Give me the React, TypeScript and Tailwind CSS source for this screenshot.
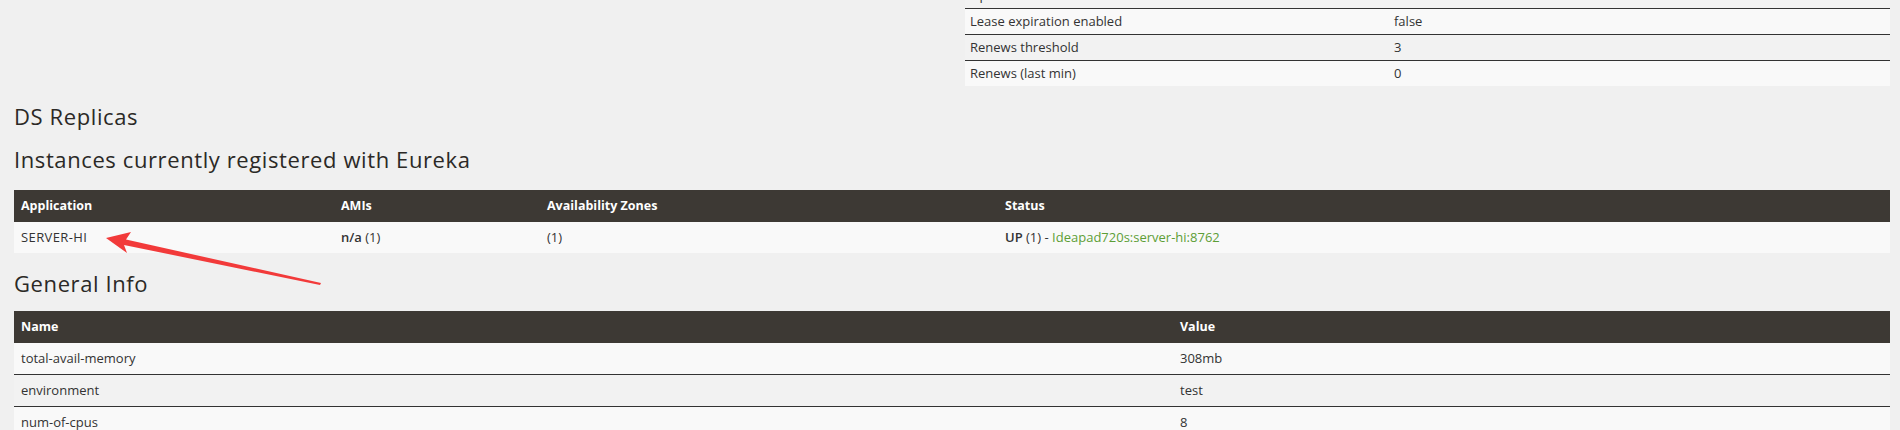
const systemRows = [
  { name: 'Uptime', value: '00:01' },
  { name: 'Lease expiration enabled', value: 'false' },
  { name: 'Renews threshold', value: '3' },
  { name: 'Renews (last min)', value: '0' },
];

const generalRows = [
  { name: 'total-avail-memory', value: '308mb' },
  { name: 'environment', value: 'test' },
  { name: 'num-of-cpus', value: '8' },
];

function Arrow() {
  // red annotation arrow pointing at SERVER-HI
  return (
    <svg
      className="pointer-events-none absolute left-0 top-0"
      width="1900"
      height="430"
      viewBox="0 0 1900 430"
    >
      <polygon
        points="106,238 131,232 126,239.5 321,283 320,285 124,245 127,253"
        fill="#f23a3a"
      />
    </svg>
  );
}

export default function App() {
  return (
    <div className="relative h-[430px] w-[1900px] overflow-hidden bg-[#f0f0f0] pl-[14px] pr-[10px] font-['Open_Sans',sans-serif] text-[13px] text-[#333]">
      {/* System status (right column, cut off at the top) */}
      <div className="-mt-[18px] grid grid-cols-[938px_1fr] gap-[13px]">
        <div />
        <div>
          {systemRows.map((row, i) => (
            <div
              key={row.name}
              className={`grid h-[26px] grid-cols-[424px_1fr] items-center border-t border-[#333] ${
                i % 2 === 0 ? 'bg-[#f2f2f2]' : 'bg-[#f9f9f9]'
              }`}
            >
              <span className="pl-[5px]">{row.name}</span>
              <span className="pl-[5px]">{row.value}</span>
            </div>
          ))}
        </div>
      </div>

      <h1 className="mt-[17px] text-[22px] leading-[26px] tracking-[0.6px] text-[#2b2926]">DS Replicas</h1>
      <h1 className="mt-[17px] text-[22px] leading-[26px] tracking-[0.6px] text-[#2b2926]">
        Instances currently registered with Eureka
      </h1>

      {/* Instances */}
      <div className="mt-[18px]">
        <div className="grid h-[32px] grid-cols-[320px_206px_458px_1fr] items-center bg-[#3d3934] text-[12.5px] font-bold text-white">
          <span className="pl-[7px]">Application</span>
          <span className="pl-[7px]">AMIs</span>
          <span className="pl-[7px]">Availability Zones</span>
          <span className="pl-[7px]">Status</span>
        </div>
        <div className="grid h-[31px] grid-cols-[320px_206px_458px_1fr] items-center bg-[#f9f9f9]">
          <span className="pl-[7px] font-medium tracking-[0.4px]">SERVER-HI</span>
          <span className="pl-[7px]">
            <b className="font-semibold">n/a</b> (1)
          </span>
          <span className="pl-[7px]">(1)</span>
          <span className="pl-[7px]">
            <b className="font-semibold">UP</b> (1) -{' '}
            <a className="text-[#5d9e36]">Ideapad720s:server-hi:8762</a>
          </span>
        </div>
      </div>

      <h1 className="mt-[17px] text-[22px] leading-[26px] tracking-[0.6px] text-[#2b2926]">General Info</h1>

      {/* General info */}
      <div className="mt-[15px]">
        <div className="grid h-[32px] grid-cols-[1159px_1fr] items-center bg-[#3d3934] text-[12.5px] font-bold text-white">
          <span className="pl-[7px]">Name</span>
          <span className="pl-[7px]">Value</span>
        </div>
        {generalRows.map((row, i) => (
          <div
            key={row.name}
            className={`grid grid-cols-[1159px_1fr] items-center ${
              i === 0 ? 'h-[31px]' : 'h-[32px] border-t border-[#333]'
            } ${i % 2 === 0 ? 'bg-[#f9f9f9]' : 'bg-[#f2f2f2]'}`}
          >
            <span className="pl-[7px]">{row.name}</span>
            <span className="pl-[7px]">{row.value}</span>
          </div>
        ))}
      </div>

      <Arrow />
    </div>
  );
}
